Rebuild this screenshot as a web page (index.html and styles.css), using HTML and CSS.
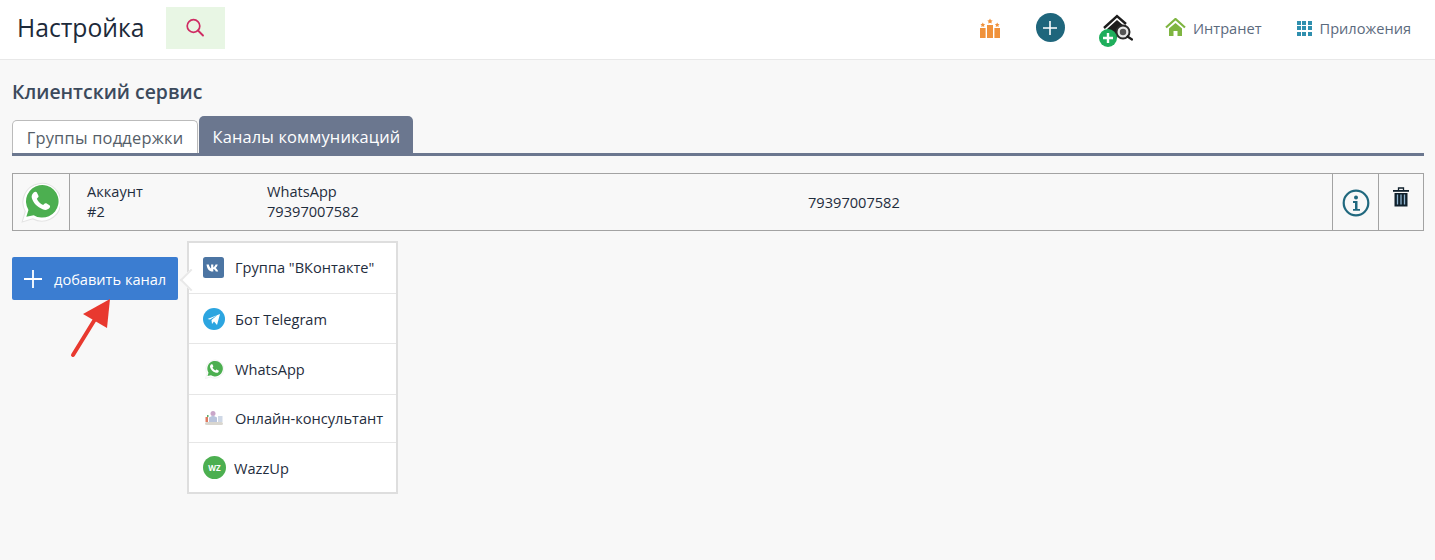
FILE: index.html
```html
<!DOCTYPE html>
<html lang="ru">
<head>
<meta charset="utf-8">
<title>Настройка</title>
<link rel="stylesheet" href="styles.css">
</head>
<body>
<header class="topbar">
  <h1 class="page-title">Настройка</h1>
  <button class="search-btn" aria-label="Поиск">
    <svg width="20" height="20" viewBox="0 0 20 20"><circle cx="8.500" cy="8" r="6.300" fill="none" stroke="#cf2c63" stroke-width="1.700"/><path d="M13 12.500l5 5" stroke="#cf2c63" stroke-width="1.900" stroke-linecap="round"/></svg>
  </button>
  <nav class="top-nav">
    <svg class="ico-rating" width="22" height="20" viewBox="0 0 22 20" fill="#f0923b"><rect x="1" y="10" width="5.600" height="10"/><rect x="8" y="7" width="6" height="13"/><rect x="15.400" y="10" width="5.600" height="10"/><path d="M3.800 4.500l.8 1.500 1.600.2-1.200 1.100.3 1.700-1.500-.8-1.500.8.3-1.700-1.200-1.100 1.600-.2zM11 .5l.9 1.700 1.800.3-1.300 1.300.3 1.800-1.700-.9-1.700.9.3-1.800-1.300-1.300 1.800-.3zM18.200 4.500l.8 1.500 1.600.2-1.200 1.100.3 1.700-1.500-.8-1.500.8.3-1.700-1.200-1.100 1.600-.2z"/></svg>
    <span class="round-add"><svg width="16" height="16" viewBox="0 0 16 16"><path d="M8 1v14M1 8h14" stroke="#fff" stroke-width="1.600"/></svg></span>
    <span class="house-add">
      <svg width="34" height="34" viewBox="0 0 34 34"><path d="M5 17 18 5l9 8" fill="none" stroke="#1d1d1d" stroke-width="2.400"/><path d="M8 18 18 9l7 6-6 7-1 5H8z" fill="#1d1d1d"/><circle cx="24" cy="21" r="6.500" fill="#e8e8e8" stroke="#2a2a2a" stroke-width="2"/><circle cx="24" cy="21" r="3.200" fill="#555"/><path d="M28.500 25.500 33 28.500" stroke="#1d1d1d" stroke-width="2.200" stroke-linecap="round"/></svg>
      <span class="house-plus"><svg width="12" height="12" viewBox="0 0 12 12"><path d="M6 1v10M1 6h10" stroke="#fff" stroke-width="2.400"/></svg></span>
    </span>
    <a class="nav-link nav-intranet"><svg width="21" height="18" viewBox="0 0 21 18"><path d="M1 9.500 10.500 1 20 9.500" fill="none" stroke="#7fb541" stroke-width="2.200"/><path d="M4 10.500 10.500 5l6.500 5.500V18h-4.500v-5h-4v5H4z" fill="#7fb541"/></svg><span>Интранет</span></a>
    <a class="nav-link nav-apps"><span class="apps-grid"><i></i><i></i><i></i><i></i><i></i><i></i><i></i><i></i><i></i></span><span>Приложения</span></a>
  </nav>
</header>

<main class="content">
  <h2 class="section-title">Клиентский сервис</h2>
  <div class="tabs">
    <a class="tab">Группы поддержки</a>
    <a class="tab tab-active">Каналы коммуникаций</a>
  </div>

  <div class="channel-row">
    <div class="cell cell-logo">
      <svg width="40" height="42" viewBox="0 0 38 40"><path d="M2 39l3-10A18 18 0 1 1 12 36z" fill="#fff" stroke="#e4e4e4"/><path d="M6 34l2-6.500A15.500 15.500 0 1 1 13 32.500z" fill="#4caf50"/><path d="M13 11c1-1 2.500-1 3 0l1.500 3c.3.7 0 1.200-.5 1.800l-1 1c1 2.500 3.500 5 6 6l1.200-1.200c.5-.5 1.100-.7 1.800-.3l3 1.700c.8.500.8 1.800 0 2.800-1.500 1.800-4 2.200-6.500 1.200-5-2-9-6-10.300-10.700-.5-2 .3-4 1.800-5.300z" fill="#fff"/></svg>
    </div>
    <div class="cell cell-main">
      <div class="col-account">Аккаунт<br>#2</div>
      <div class="col-name">WhatsApp<br>79397007582</div>
      <div class="col-phone">79397007582</div>
    </div>
    <div class="cell cell-info">
      <svg width="28" height="28" viewBox="0 0 28 28"><circle cx="14" cy="14" r="12.300" fill="none" stroke="#20687e" stroke-width="2.200"/><circle cx="14" cy="8.500" r="2" fill="#20687e"/><path d="M11 12h4.500v8H18v1.800h-7V20h2v-6h-2z" fill="#20687e"/></svg>
    </div>
    <div class="cell cell-trash">
      <svg width="16" height="20" viewBox="0 0 16 20"><path d="M5.500 3V1h5v2" fill="none" stroke="#10202c" stroke-width="1.300"/><rect x="0" y="3" width="16" height="1.800" fill="#10202c"/><path d="M1.500 6h13v13.500h-13z" fill="#10202c"/><path d="M4.500 7.500v10M8 7.500v10M11.500 7.500v10" stroke="#8fb4d0" stroke-width="1.300"/></svg>
    </div>
  </div>

  <div class="add-area">
    <button class="add-btn">
      <svg width="18" height="18" viewBox="0 0 18 18"><path d="M9 0v18M0 9h18" stroke="#fff" stroke-width="1.800"/></svg>
      <span>добавить канал</span>
    </button>
    <svg class="arrow" width="42" height="60" viewBox="0 0 42 60"><path d="M3 56 27 17" stroke="#e8392f" stroke-width="4" stroke-linecap="round"/><path d="M40 0 13 15l24 14z" fill="#e8392f"/></svg>

    <div class="menu">
      <span class="menu-tip"></span>
      <a class="menu-item item-vk">
        <span class="menu-ico"><svg width="21" height="21" viewBox="0 0 21 21"><rect width="21" height="21" rx="2.500" fill="#4c75a3"/><path d="M3.500 7.500h2.300c.5 2 1.500 3.500 2.300 4V7.500h2.200v3c.9-.3 1.800-1.700 2.200-3h2.200c-.4 1.700-1.400 3-2.100 3.600.9.500 2 1.700 2.600 3.400h-2.400c-.5-1.400-1.500-2.300-2.500-2.500v2.500H9.600c-3.500 0-5.500-2.500-6.100-7z" fill="#fff"/></svg></span>
        <span>Группа "ВКонтакте"</span>
      </a>
      <a class="menu-item item-tg">
        <span class="menu-ico"><svg width="22" height="22" viewBox="0 0 22 22"><circle cx="11" cy="11" r="11" fill="#2ca5e0"/><path d="M4.500 11 17 6l-3 11-3-3.500-2 2.500-.5-4 6-5-7.500 4.500z" fill="#fff"/></svg></span>
        <span>Бот Telegram</span>
      </a>
      <a class="menu-item item-wa">
        <span class="menu-ico"><svg width="20" height="20" viewBox="0 0 38 40"><path d="M2 39l3-10A18 18 0 1 1 12 36z" fill="#fff" stroke="#e4e4e4"/><path d="M6 34l2-6.500A15.500 15.500 0 1 1 13 32.500z" fill="#4caf50"/><path d="M13 11c1-1 2.500-1 3 0l1.500 3c.3.7 0 1.200-.5 1.800l-1 1c1 2.500 3.500 5 6 6l1.200-1.200c.5-.5 1.100-.7 1.800-.3l3 1.700c.8.500.8 1.800 0 2.800-1.500 1.800-4 2.200-6.500 1.200-5-2-9-6-10.300-10.700-.5-2 .3-4 1.800-5.300z" fill="#fff"/></svg></span>
        <span>WhatsApp</span>
      </a>
      <a class="menu-item item-online">
        <span class="menu-ico"><svg width="20" height="16" viewBox="0 0 20 16"><rect x="1" y="12" width="18" height="3" rx="1.500" fill="#d9d6cf"/><circle cx="9" cy="3.500" r="2.500" fill="#c9a6c9"/><path d="M5 12V7.500l4-2 4 2V12z" fill="#b9c4dc"/><rect x="1.500" y="7" width="2.500" height="5" fill="#e07a5f"/><rect x="14" y="6" width="4.500" height="6" fill="#cfd8e6"/><rect x="3" y="5" width="1.500" height="2" fill="#5fb06a"/></svg></span>
        <span>Онлайн-консультант</span>
      </a>
      <a class="menu-item item-wz">
        <span class="menu-ico"><span class="wz-badge">WZ</span></span>
        <span>WazzUp</span>
      </a>
    </div>
  </div>
</main>
</body>
</html>
```

FILE: styles.css
```css
* { box-sizing: border-box; }
html, body { margin: 0; height: 100%; }
body {
  background: #f8f8f8;
  font-family: "Open Sans", sans-serif;
  color: #1f2d3d;
  overflow: hidden;
}
a { text-decoration: none; color: inherit; }

.topbar {
  height: 60px;
  background: #fff;
  border-bottom: 1px solid #e8e8e8;
  display: flex;
  align-items: flex-start;
  padding-left: 17px;
}
.page-title {
  margin: 11px 0 0;
  font-size: 24.700px;
  line-height: 33px;
  font-weight: 400;
  color: #1d2a3a;
}
.search-btn {
  width: 59px;
  height: 42px;
  margin: 7px 0 0 21px;
  background: #e8f6e4;
  border: 0;
  padding: 0;
  display: flex;
  align-items: center;
  justify-content: center;
}
.top-nav {
  margin-left: auto;
  height: 56px;
  display: flex;
  align-items: center;
  padding-right: 24px;
}
.ico-rating { margin-right: 35px; margin-top: -1px; }
.round-add {
  width: 29px;
  height: 29px;
  border-radius: 50%;
  background: #1f667c;
  display: flex;
  align-items: center;
  justify-content: center;
  margin-right: 34px;
  margin-top: -1px;
}
.house-add {
  position: relative;
  width: 34px;
  height: 34px;
  margin-right: 32px;
}
.house-plus {
  position: absolute;
  left: 0;
  top: 18px;
  width: 18px;
  height: 18px;
  border-radius: 50%;
  background: #1fae5c;
  display: flex;
  align-items: center;
  justify-content: center;
}
.nav-link {
  display: flex;
  align-items: center;
  font-size: 14.600px;
  color: #5b6a7d;
}
.nav-intranet { gap: 7px; margin-right: 35px; }
.nav-intranet svg { margin-top: -2px; }
.nav-apps { gap: 8px; }
.apps-grid {
  display: grid;
  grid-template-columns: repeat(3, 4px);
  grid-auto-rows: 4px;
  gap: 1.500px;
}
.apps-grid i { background: #2f8fae; }

.content { padding: 0 11px 0 12px; }
.section-title {
  margin: 19px 0 0;
  font-size: 19.400px;
  line-height: 26px;
  font-weight: 600;
  color: #3c4a5c;
}
.tabs {
  margin-top: 11px;
  height: 40px;
  display: flex;
  align-items: flex-end;
  gap: 1px;
  border-bottom: 3px solid #6b778f;
}
.tab {
  width: 186px;
  height: 33px;
  background: #fff;
  border: 1px solid #bbb;
  border-bottom: 0;
  border-radius: 5px 5px 0 0;
  display: flex;
  align-items: center;
  justify-content: center;
  font-size: 16.400px;
  color: #555e68;
  letter-spacing: .23px;
}
.tab-active {
  width: 214px;
  height: 37px;
  background: #6b778f;
  border: 0;
  padding: 3px 0 0 1px;
  letter-spacing: .16px;
  color: #fff;
}

.channel-row {
  margin-top: 17px;
  height: 58px;
  display: flex;
  border: 1px solid #a3a3a3;
  font-size: 14.600px;
  line-height: 20px;
  color: #1f2d3d;
}
.cell { height: 100%; display: flex; align-items: center; }
.cell-logo {
  width: 57px;
  border-right: 1px solid #a3a3a3;
  justify-content: center;
  padding-right: 2px;
}
.cell-main { flex: 1; padding: 0 0 2px 17px; }
.col-account { width: 180px; }
.col-name { width: 541px; }
.col-phone { padding-top: 2px; }
.cell-info {
  width: 46px;
  border-left: 1px solid #a3a3a3;
  justify-content: center;
  padding-left: 1px;
  padding-top: 1px;
}
.cell-trash {
  width: 45px;
  border-left: 1px solid #a3a3a3;
  justify-content: center;
  align-items: flex-start;
  padding-top: 13px;
}

.add-area {
  position: relative;
  margin-top: 26px;
}
.add-btn {
  width: 166px;
  height: 43px;
  background: #3b7dd1;
  border: 0;
  border-radius: 2px;
  padding: 0 0 0 12px;
  display: flex;
  align-items: center;
  gap: 12px;
  color: #fff;
  font-family: inherit;
  font-size: 14.600px;
}
.arrow {
  position: absolute;
  left: 58px;
  top: 42px;
}
.menu {
  position: absolute;
  left: 175px;
  top: -16px;
  width: 211px;
  height: 253px;
  background: #fff;
  border: 2px solid #dedede;
  display: flex;
  flex-direction: column;
  font-size: 14.600px;
  color: #1f2d3d;
}
.menu-tip {
  position: absolute;
  left: -6px;
  top: 29px;
  width: 16px;
  height: 16px;
  background: #fff;
  transform: rotate(45deg);
  border-left: 2px solid #e8e8e8;
  border-bottom: 2px solid #e8e8e8;
}
.menu-item {
  position: relative;
  display: flex;
  align-items: center;
  padding-left: 14px;
  border-bottom: 1px solid #e6e6e6;
}
.menu-item:last-child { border-bottom: 0; }
.menu-ico {
  width: 32px;
  display: flex;
  align-items: center;
}
.item-vk { height: 51px; padding-bottom: 2px; }
.item-tg { height: 50px; }
.item-wa { height: 51px; }
.item-online { height: 48px; padding-bottom: 2px; }
.item-wz { flex: 1; }
.item-wz .menu-ico { width: 31px; }
.item-wa .menu-ico, .item-online .menu-ico { padding-left: 1px; }
.wz-badge {
  width: 23px;
  height: 23px;
  border-radius: 50%;
  background: #4caf50;
  color: #fff;
  font-size: 8px;
  font-weight: 700;
  display: flex;
  align-items: center;
  justify-content: center;
}
```
